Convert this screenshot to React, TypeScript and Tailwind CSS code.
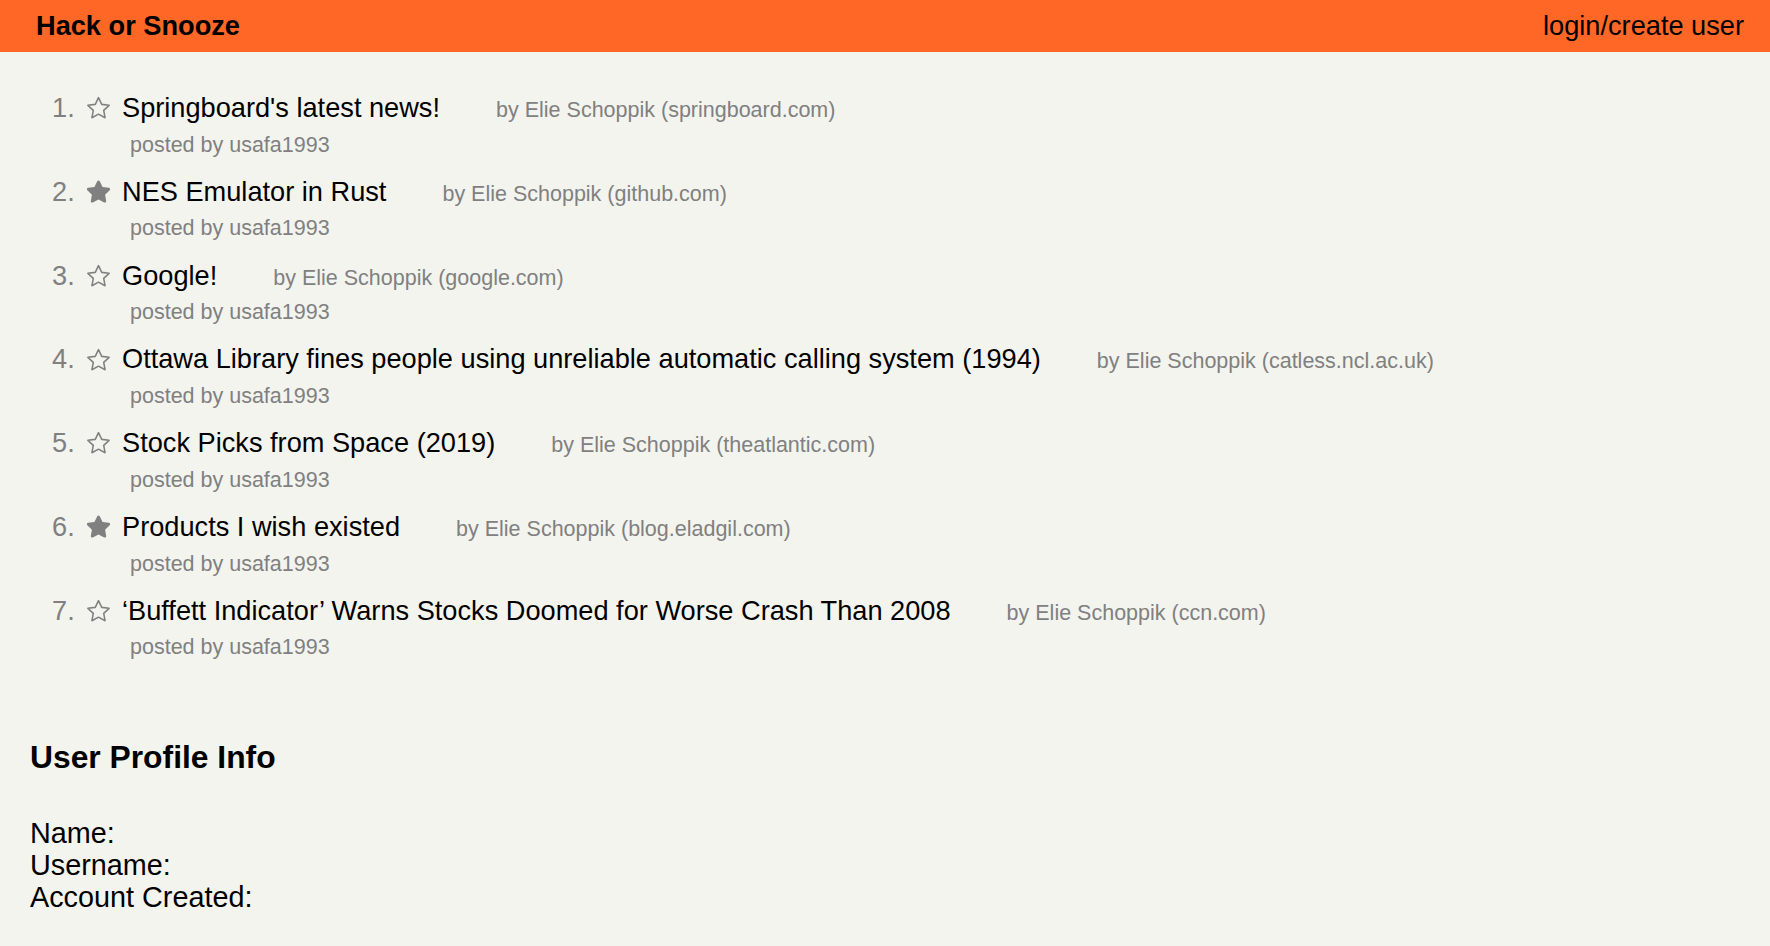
import { FaStar } from "react-icons/fa";

type Story = {
  title: string;
  host: string;
  fav: boolean;
};

const stories: Story[] = [
  { title: "Springboard's latest news!", host: "springboard.com", fav: false },
  { title: "NES Emulator in Rust", host: "github.com", fav: true },
  { title: "Google!", host: "google.com", fav: false },
  {
    title: "Ottawa Library fines people using unreliable automatic calling system (1994)",
    host: "catless.ncl.ac.uk",
    fav: false,
  },
  { title: "Stock Picks from Space (2019)", host: "theatlantic.com", fav: false },
  { title: "Products I wish existed", host: "blog.eladgil.com", fav: true },
  {
    title: "\u2018Buffett Indicator\u2019 Warns Stocks Doomed for Worse Crash Than 2008",
    host: "ccn.com",
    fav: false,
  },
];

// thin outline star (unfavorited)
function OutlineStar() {
  return (
    <svg width="25" height="23" viewBox="0 0 24 22" fill="none">
      <path
        d="M12 1.5l3.1 6.5 7.1.9-5.2 4.9 1.3 7L12 17.4l-6.3 3.4 1.3-7L1.8 8.9l7.1-.9z"
        stroke="currentColor"
        strokeWidth="1.5"
        strokeLinejoin="round"
      />
    </svg>
  );
}

function StoryRow({ story, index }: { story: Story; index: number }) {
  return (
    <li className="mb-[18.5px]">
      <div className="flex items-baseline">
        <span className="w-[34px] text-[#808080]">{index + 1}.</span>
        <span className="flex w-[36px] items-center self-center text-[#808080]">
          {story.fav ? <FaStar size={25} /> : <OutlineStar />}
        </span>
        <span className="text-black">{story.title}</span>
        <span className="ml-[56px] text-[21.5px] text-[#808080]">
          by Elie Schoppik ({story.host})
        </span>
      </div>
      <div className="mt-[9.3px] pl-[78px] text-[21.5px] text-[#808080]">
        posted by usafa1993
      </div>
    </li>
  );
}

export default function App() {
  return (
    <div className="min-h-screen bg-[#f4f4ef] font-['Liberation_Sans',Arial,sans-serif] text-[27.2px] leading-[1.15] text-black">
      <nav className="flex h-[52px] items-center justify-between bg-[#ff6726] pl-[36px] pr-[26px]">
        <span className="font-bold">Hack or Snooze</span>
        <span>login/create user</span>
      </nav>

      <ol className="pl-[52px] pt-[40px]">
        {stories.map((s, i) => (
          <StoryRow key={i} story={s} index={i} />
        ))}
      </ol>

      <section className="pl-[30px] pt-[60.5px]">
        <h3 className="text-[31.8px] font-bold">User Profile Info</h3>
        <div className="mt-[41px] text-[28.8px] leading-[32px]">
          <div>Name:</div>
          <div>Username:</div>
          <div>Account Created:</div>
        </div>
      </section>
    </div>
  );
}
